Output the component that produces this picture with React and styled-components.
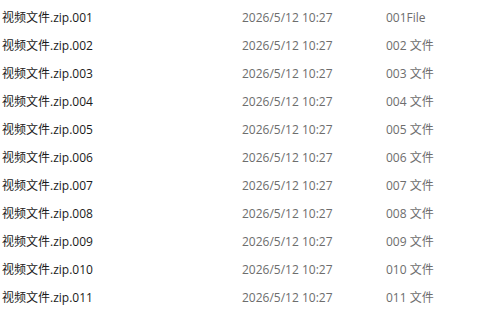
import styled, { createGlobalStyle } from 'styled-components';

const GlobalStyle = createGlobalStyle`
  body {
    margin: 0;
    background: #ffffff;
  }
`;

const List = styled.div`
  display: flex;
  flex-direction: column;
  padding-top: 3px;
  font-family: "Segoe UI", "Open Sans", "Noto Sans CJK SC", sans-serif;
  font-size: 12px;
`;

const Row = styled.div`
  display: grid;
  grid-template-columns: 240px 144px 1fr;
  height: 28px;
  align-items: center;
  padding-left: 2px;
`;

const Cell = styled.span`
  color: ${(p) => (p.$muted ? '#6d6d6d' : '#1a1a1a')};
  white-space: nowrap;
`;

const files = Array.from({ length: 11 }, (_, i) => {
  const n = String(i + 1).padStart(3, '0');
  return {
    name: `视频文件.zip.${n}`,
    date: '2026/5/12 10:27',
    type: i === 0 ? `${n}File` : `${n} 文件`,
  };
});

export default function App() {
  return (
    <>
      <GlobalStyle />
      <List>
        {files.map((f) => (
          <Row key={f.name}>
            <Cell>{f.name}</Cell>
            <Cell $muted>{f.date}</Cell>
            <Cell $muted>{f.type}</Cell>
          </Row>
        ))}
      </List>
    </>
  );
}
